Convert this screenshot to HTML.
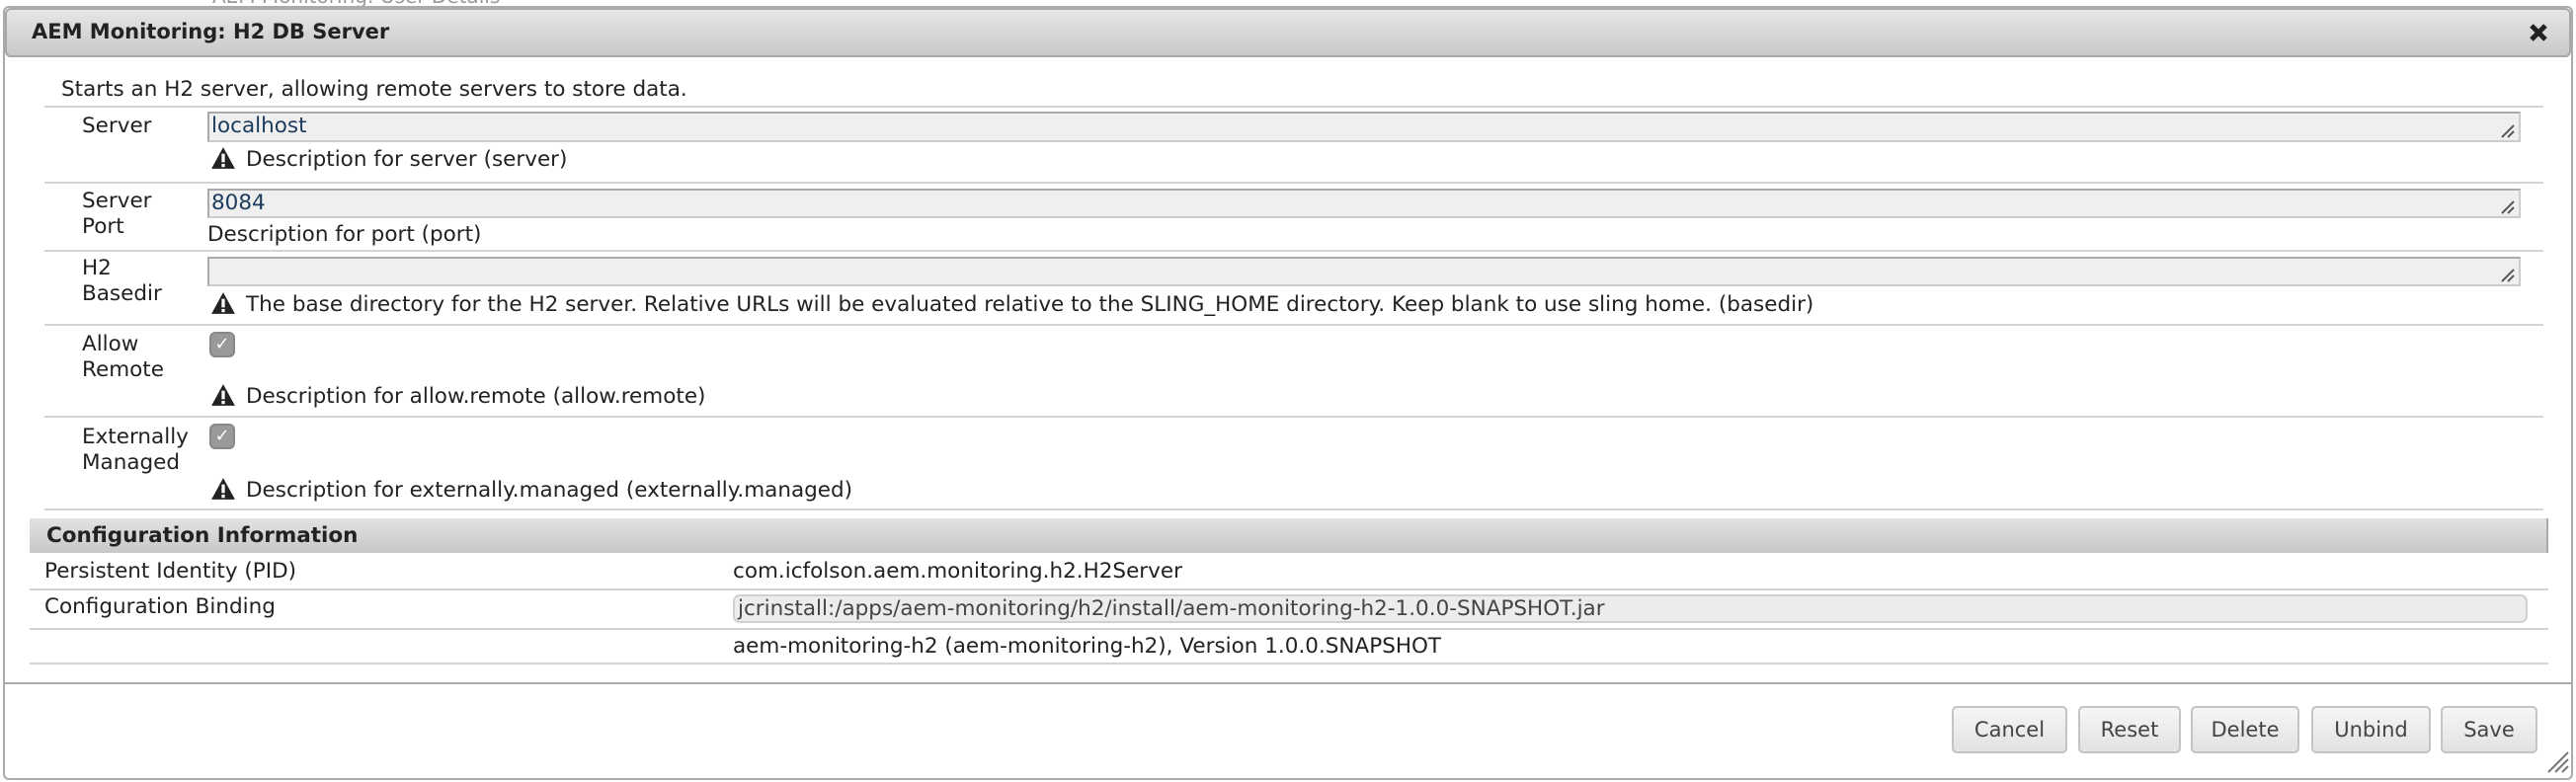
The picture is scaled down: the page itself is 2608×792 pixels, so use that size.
<!DOCTYPE html>
<html><head><meta charset="utf-8"><style>
*{box-sizing:border-box;margin:0;padding:0}
body{width:2608px;height:792px;background:#fff;font-family:"DejaVu Sans","Liberation Sans",sans-serif;font-size:21.5px;color:#222;position:relative;overflow:hidden}
.a{position:absolute;white-space:nowrap}
.t{position:absolute;white-space:nowrap;line-height:26px}
.sep{position:absolute;height:2px;background:#d4d4d4}
.inp{position:absolute;background:#efefef;border:2px solid #aaa;border-right-color:#ccc;border-bottom-color:#ccc;color:#1b3a5c;padding-left:2px;line-height:26px}
.inp svg{position:absolute;right:4px;bottom:2px}
.chk{position:absolute;width:26px;height:26px;border-radius:6px;background:#999;border:2px solid #888;color:#fff;font-size:18px;text-align:center;line-height:22px}
.btn{position:absolute;top:715px;height:48px;border:2px solid #c4c4c4;border-radius:5px;background:linear-gradient(#f6f6f6,#e2e2e2);color:#444;font-size:21px;text-align:center;line-height:44px}
.w{display:inline-block;vertical-align:-4px;margin-right:10px}
</style></head><body>
<div class="a" style="left:215px;top:-16px;color:#999;font-size:20px">AEM Monitoring: User Details</div>
<div class="a" style="left:3px;top:6px;width:2602px;height:784px;border:2px solid #aaa;border-radius:6px;background:#fff"></div>
<div class="a" style="left:5px;top:8px;width:2598px;height:50px;border:2px solid #a8a8a8;border-radius:6px;background:linear-gradient(#e6e6e6,#c9c9c9)"></div>
<div class="a" style="left:32px;top:20px;font-weight:bold;font-size:21px;color:#222">AEM Monitoring: H2 DB Server</div>
<svg class="a" style="left:2560px;top:23px" width="20" height="20" viewBox="0 0 20 20"><path d="M3 3L17 17M17 3L3 17" stroke="#222" stroke-width="5"/></svg>

<div class="t" style="left:62px;top:78px">Starts an H2 server, allowing remote servers to store data.</div>
<div class="sep" style="left:45px;top:107px;width:2530px"></div>

<div class="t" style="left:83px;top:115px">Server</div>
<div class="inp" style="left:210px;top:113px;width:2342px;height:31px">localhost<svg width="16" height="14"><path d="M3 13L15 1M9 13L15 7" stroke="#555" stroke-width="2"/></svg></div>
<div class="t" style="left:213px;top:148px"><svg class="w" width="26" height="24" viewBox="0 0 24 22"><path d="M12 1L23 21H1Z" fill="#222"/><rect x="10.5" y="7" width="3" height="8" fill="#fff"/><rect x="10.5" y="16.5" width="3" height="3" fill="#fff"/></svg>Description for server (server)</div>
<div class="sep" style="left:45px;top:184px;width:2530px"></div>

<div class="t" style="left:83px;top:191px">Server<br>Port</div>
<div class="inp" style="left:210px;top:191px;width:2342px;height:30px">8084<svg width="16" height="14"><path d="M3 13L15 1M9 13L15 7" stroke="#555" stroke-width="2"/></svg></div>
<div class="t" style="left:210px;top:225px">Description for port (port)</div>
<div class="sep" style="left:45px;top:253px;width:2530px"></div>

<div class="t" style="left:83px;top:259px">H2<br>Basedir</div>
<div class="inp" style="left:210px;top:260px;width:2342px;height:30px"><svg width="16" height="14"><path d="M3 13L15 1M9 13L15 7" stroke="#555" stroke-width="2"/></svg></div>
<div class="t" style="left:213px;top:295px"><svg class="w" width="26" height="24" viewBox="0 0 24 22"><path d="M12 1L23 21H1Z" fill="#222"/><rect x="10.5" y="7" width="3" height="8" fill="#fff"/><rect x="10.5" y="16.5" width="3" height="3" fill="#fff"/></svg>The base directory for the H2 server. Relative URLs will be evaluated relative to the SLING_HOME directory. Keep blank to use sling home. (basedir)</div>
<div class="sep" style="left:45px;top:328px;width:2530px"></div>

<div class="t" style="left:83px;top:336px">Allow<br>Remote</div>
<div class="chk" style="left:212px;top:336px">✓</div>
<div class="t" style="left:213px;top:388px"><svg class="w" width="26" height="24" viewBox="0 0 24 22"><path d="M12 1L23 21H1Z" fill="#222"/><rect x="10.5" y="7" width="3" height="8" fill="#fff"/><rect x="10.5" y="16.5" width="3" height="3" fill="#fff"/></svg>Description for allow.remote (allow.remote)</div>
<div class="sep" style="left:45px;top:421px;width:2530px"></div>

<div class="t" style="left:83px;top:430px">Externally<br>Managed</div>
<div class="chk" style="left:212px;top:429px">✓</div>
<div class="t" style="left:213px;top:483px"><svg class="w" width="26" height="24" viewBox="0 0 24 22"><path d="M12 1L23 21H1Z" fill="#222"/><rect x="10.5" y="7" width="3" height="8" fill="#fff"/><rect x="10.5" y="16.5" width="3" height="3" fill="#fff"/></svg>Description for externally.managed (externally.managed)</div>
<div class="sep" style="left:45px;top:515px;width:2530px"></div>

<div class="a" style="left:30px;top:525px;width:2550px;height:35px;background:linear-gradient(#e2e2e2,#c8c8c8);border-right:2px solid #aaa"></div>
<div class="t" style="left:47px;top:530px;font-weight:bold">Configuration Information</div>
<div class="t" style="left:45px;top:566px">Persistent Identity (PID)</div>
<div class="t" style="left:742px;top:566px">com.icfolson.aem.monitoring.h2.H2Server</div>
<div class="sep" style="left:30px;top:596px;width:2550px"></div>
<div class="t" style="left:45px;top:602px">Configuration Binding</div>
<div class="a" style="left:742px;top:602px;width:1817px;height:29px;background:#ececec;border:2px solid #d0d0d0;border-radius:7px;line-height:25px;padding-left:3px;color:#444">jcrinstall:/apps/aem-monitoring/h2/install/aem-monitoring-h2-1.0.0-SNAPSHOT.jar</div>
<div class="sep" style="left:30px;top:636px;width:2550px"></div>
<div class="t" style="left:742px;top:642px">aem-monitoring-h2 (aem-monitoring-h2), Version 1.0.0.SNAPSHOT</div>
<div class="sep" style="left:30px;top:671px;width:2550px"></div>

<div class="a" style="left:5px;top:691px;width:2598px;height:2px;background:#aaa"></div>
<div class="btn" style="left:1976px;width:117px">Cancel</div>
<div class="btn" style="left:2104px;width:104px">Reset</div>
<div class="btn" style="left:2218px;width:110px">Delete</div>
<div class="btn" style="left:2340px;width:121px">Unbind</div>
<div class="btn" style="left:2471px;width:98px">Save</div>
<svg class="a" style="left:2578px;top:760px" width="24" height="24"><path d="M2 22L22 2M9 22L22 9M16 22L22 16" stroke="#777" stroke-width="2"/></svg>
</body></html>
